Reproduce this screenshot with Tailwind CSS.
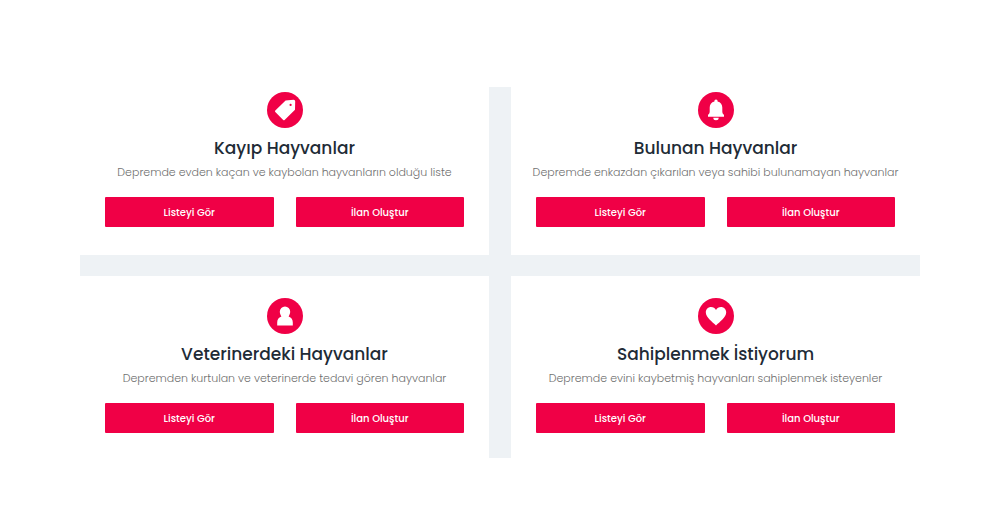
<!DOCTYPE html>
<html lang="tr">
  <head>
    <meta charset="UTF-8" />
    <meta name="viewport" content="width=device-width, initial-scale=1" />
    <title>Depremzede Hayvanlar</title>
    <script src="https://cdn.jsdelivr.net/npm/@tailwindcss/browser@4"></script>
  </head>
  <body class="bg-white font-['Poppins','Inter',sans-serif] text-[#212b36]">
    <main class="px-4 md:px-20 pt-[87px] pb-16">
      <div class="grid md:grid-cols-2 gap-x-[22px] gap-y-[21px] bg-[#eef2f5]">

        <!-- Kayıp -->
        <section class="bg-white px-[25px] pt-[5px] pb-7 text-center">
          <div class="mx-auto flex size-9 items-center justify-center rounded-full bg-[#f00046] text-white">
            <svg class="size-6" viewBox="0 0 24 24" fill="currentColor" aria-hidden="true">
              <path fill-rule="evenodd" d="M12.6 2.4 20.6 1.700Q22.200 1.700 22.200 3.200L22 11.800 11.600 22Q10.900 22.700 10.200 22L2.300 14.100Q1.600 13.300 2.300 12.600ZM17.600 5.800a1.100 1.100 0 1 0 0 2.200 1.100 1.100 0 0 0 0-2.200Z" />
            </svg>
          </div>
          <h2 class="mt-2 text-[17px] leading-6 font-medium">Kayıp Hayvanlar</h2>
          <p class="-mx-3 mt-1 text-[11px] leading-4 font-light text-[#707070]">Depremde evden kaçan ve kaybolan hayvanların olduğu liste</p>
          <div class="mt-[17px] grid grid-cols-2 gap-[22px]">
            <button type="button" class="h-[30px] rounded-[1px] bg-[#f00046] text-[10px] font-medium text-white">Listeyi Gör</button>
            <button type="button" class="h-[30px] rounded-[1px] bg-[#f00046] text-[10px] font-medium text-white">İlan Oluştur</button>
          </div>
        </section>

        <!-- Bulunan -->
        <section class="bg-white px-[25px] pt-[5px] pb-7 text-center">
          <div class="mx-auto flex size-9 items-center justify-center rounded-full bg-[#f00046] text-white">
            <svg class="size-6" viewBox="0 0 24 24" fill="currentColor" aria-hidden="true">
              <path d="M12 1.600a1.600 1.600 0 0 1 1.600 1.800C16.700 4.100 18.300 6.500 18.300 9.600V13.500C18.300 15.200 18.900 16 20 16.700V18.700H4V16.700C5.100 16 5.700 15.200 5.700 13.500V9.600C5.700 6.500 7.300 4.100 10.400 3.400A1.600 1.600 0 0 1 12 1.600ZM9.300 19.800H14.700A2.700 2.500 0 0 1 9.300 19.800Z" />
            </svg>
          </div>
          <h2 class="mt-2 text-[17px] leading-6 font-medium">Bulunan Hayvanlar</h2>
          <p class="-mx-3 mt-1 text-[11px] leading-4 font-light text-[#707070]">Depremde enkazdan çıkarılan veya sahibi bulunamayan hayvanlar</p>
          <div class="mt-[17px] grid grid-cols-2 gap-[22px]">
            <button type="button" class="h-[30px] rounded-[1px] bg-[#f00046] text-[10px] font-medium text-white">Listeyi Gör</button>
            <button type="button" class="h-[30px] rounded-[1px] bg-[#f00046] text-[10px] font-medium text-white">İlan Oluştur</button>
          </div>
        </section>

        <!-- Veteriner -->
        <section class="bg-white px-[25px] pt-[22px] pb-[25px] text-center">
          <div class="mx-auto flex size-9 items-center justify-center rounded-full bg-[#f00046] text-white">
            <svg class="size-6" viewBox="0 0 24 24" fill="currentColor" aria-hidden="true">
              <path d="M12 2.500a5.200 5.200 0 0 1 5.200 5.200c0 1.800-.9 3.400-1.600 4.700C18.500 13.400 19.800 15.600 19.800 18.500V21.500H4.200V18.500C4.200 15.600 5.500 13.400 8.400 12.400 7.700 11.100 6.800 9.500 6.800 7.700A5.200 5.200 0 0 1 12 2.500Z" />
            </svg>
          </div>
          <h2 class="mt-2 text-[17px] leading-6 font-medium">Veterinerdeki Hayvanlar</h2>
          <p class="-mx-3 mt-1 text-[11px] leading-4 font-light text-[#707070]">Depremden kurtulan ve veterinerde tedavi gören hayvanlar</p>
          <div class="mt-[17px] grid grid-cols-2 gap-[22px]">
            <button type="button" class="h-[30px] rounded-[1px] bg-[#f00046] text-[10px] font-medium text-white">Listeyi Gör</button>
            <button type="button" class="h-[30px] rounded-[1px] bg-[#f00046] text-[10px] font-medium text-white">İlan Oluştur</button>
          </div>
        </section>

        <!-- Sahiplenme -->
        <section class="bg-white px-[25px] pt-[22px] pb-[25px] text-center">
          <div class="mx-auto flex size-9 items-center justify-center rounded-full bg-[#f00046] text-white">
            <svg class="size-6" viewBox="0 0 24 24" fill="currentColor" aria-hidden="true">
              <path d="M12 21.500C8.500 18 1.800 13.500 1.800 8.300 1.800 5.200 4.200 3 7 3 9.200 3 11.100 4.300 12 6 12.900 4.300 14.800 3 17 3 19.800 3 22.200 5.200 22.200 8.300 22.200 13.500 15.500 18 12 21.500Z" />
            </svg>
          </div>
          <h2 class="mt-2 text-[17px] leading-6 font-medium">Sahiplenmek İstiyorum</h2>
          <p class="-mx-3 mt-1 text-[11px] leading-4 font-light text-[#707070]">Depremde evini kaybetmiş hayvanları sahiplenmek isteyenler</p>
          <div class="mt-[17px] grid grid-cols-2 gap-[22px]">
            <button type="button" class="h-[30px] rounded-[1px] bg-[#f00046] text-[10px] font-medium text-white">Listeyi Gör</button>
            <button type="button" class="h-[30px] rounded-[1px] bg-[#f00046] text-[10px] font-medium text-white">İlan Oluştur</button>
          </div>
        </section>

      </div>
    </main>
  </body>
</html>
